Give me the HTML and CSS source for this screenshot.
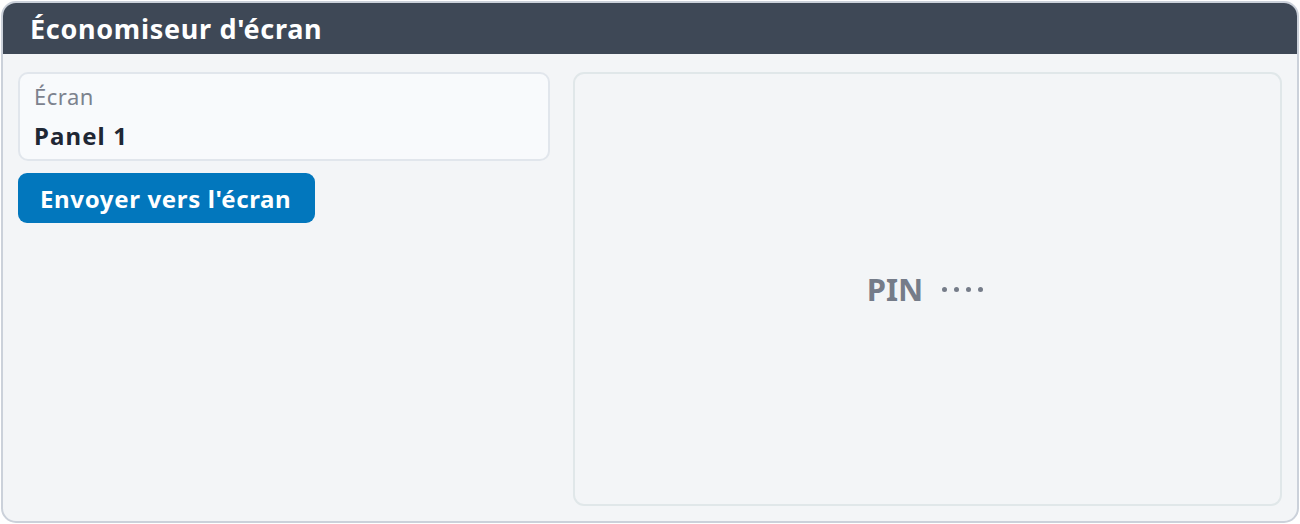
FILE: index.html
```html
<!DOCTYPE html>
<html lang="fr">
<head>
<meta charset="utf-8">
<title>Économiseur d'écran</title>
<link rel="stylesheet" href="styles.css">
</head>
<body>
<div class="frame">
  <header class="frame-header">
    <h1 class="frame-title">Économiseur d'écran</h1>
  </header>
  <main class="frame-body">
    <section class="left-col">
      <div class="field-card">
        <div class="field-label">Écran</div>
        <div class="field-value">Panel 1</div>
      </div>
      <button class="send-btn" type="button">Envoyer vers l'écran</button>
    </section>
    <section class="preview">
      <div class="pin">
        <span class="pin-label">PIN</span>
        <span class="pin-dots"><i class="dot"></i><i class="dot"></i><i class="dot"></i><i class="dot"></i></span>
      </div>
    </section>
  </main>
</div>
</body>
</html>
```

FILE: styles.css
```css
* { box-sizing: border-box; }
html, body { margin: 0; padding: 0; background: #ffffff; }
body {
  font-family: "Noto Sans", "Open Sans", sans-serif;
  width: 1300px;
  height: 524px;
  padding: 1px;
}
.frame {
  width: 1298px;
  height: 522px;
  border: 2px solid #cbd1da;
  border-radius: 15px;
  overflow: hidden;
  background: #f3f5f7;
  display: flex;
  flex-direction: column;
}
.frame-header {
  background: #3e4856;
  height: 51px;
  flex: none;
  display: flex;
  align-items: center;
  padding-left: 27px;
}
.frame-title {
  margin: 0;
  color: #ffffff;
  font-size: 27px;
  letter-spacing: 0.7px;
  font-weight: 700;
  line-height: 1;
}
.frame-body {
  flex: 1;
  display: flex;
  gap: 23px;
  padding: 18px 15px 15px 15px;
}
.left-col {
  width: 532px;
  flex: none;
  display: flex;
  flex-direction: column;
  align-items: flex-start;
  gap: 12px;
}
.field-card {
  width: 100%;
  height: 89px;
  background: #f8fafc;
  border: 2px solid #e1e6ec;
  border-radius: 10px;
  padding: 7px 15px 0 14px;
}
.field-label {
  color: #7c828e;
  font-size: 22px;
  letter-spacing: 0.5px;
  line-height: 30px;
}
.field-value {
  color: #1f2734;
  font-size: 24px;
  letter-spacing: 1.1px;
  font-weight: 700;
  line-height: 32px;
  margin-top: 9px;
}
.send-btn {
  height: 50px;
  width: 297px;
  border: none;
  border-radius: 9px;
  background: #0277bd;
  color: #ffffff;
  font-family: inherit;
  font-size: 24px;
  letter-spacing: 0.65px;
  font-weight: 700;
  padding: 0 22px;
  text-align: left;
}
.preview {
  flex: 1;
  border: 2px solid #e0e7e9;
  border-radius: 11px;
  background: #f3f5f7;
  display: flex;
  align-items: center;
  justify-content: center;
}
.pin {
  display: flex;
  align-items: center;
  gap: 19px;
  color: #757c89;
  margin-left: -5px;
}
.pin-label {
  font-size: 31px;
  font-weight: 700;
  line-height: 1;
}
.pin-dots {
  display: flex;
  gap: 7px;
}
.dot {
  width: 5px;
  height: 5px;
  border-radius: 50%;
  background: #757c89;
}
```
